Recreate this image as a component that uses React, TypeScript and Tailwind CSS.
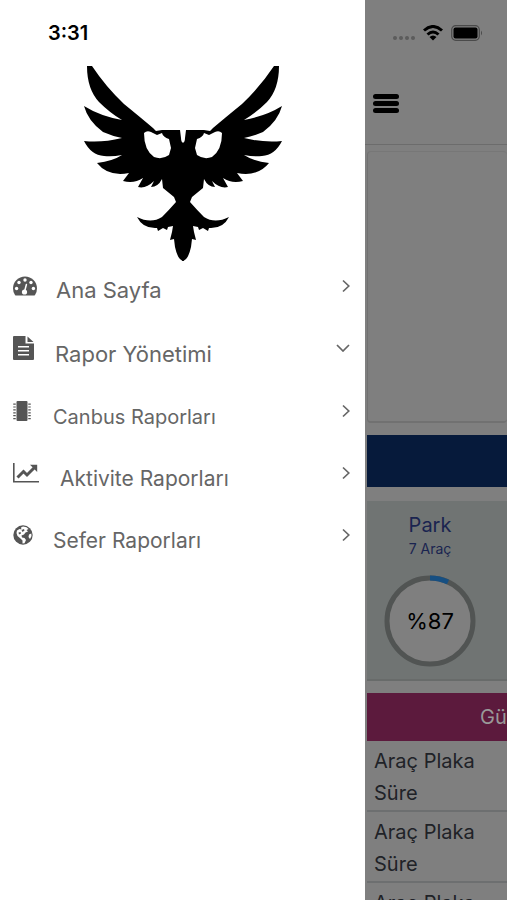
import React from "react";

const font = "font-['Inter','Liberation_Sans',sans-serif]";

function Wing() {
  return (
    <path
      fillRule="evenodd"
      d="M87 67H92Q106 88 124 105Q140 118 153 129L156 132L162 131H180L181 139Q181 144 184 144V262Q178 262 175 248L174 240L170 241L172 233L173 227L168 228L167 231L163 229L158 232L157 229Q143 230 137 218Q151 225 162 218Q169 211 176 203L174 198L163 189L162 180Q158 188 151 188L154 182Q146 190 138 188L143 179Q134 185 123 182L129 174Q108 178 97 164Q113 162 122 156Q112 158 104 157Q91 156 84 142Q102 144 122 139Q112 137 103 133Q88 122 84 107Q100 117 122 121Q110 114 99 103Q87 90 87 67ZM144 134Q147 131 151 133L157 136L162 134Q163 138 169 140L171 149L169 156Q162 161 154 158Q144 151 144 134Z"
    />
  );
}

function EagleLogo() {
  return (
    <svg viewBox="82 67 201 196" className="mx-auto h-[196px] w-[201px]" role="img" aria-label="Logo">
      <Wing />
      <g transform="matrix(-1 0 0 1 366 0)"><Wing /></g>
    </svg>
  );
}

function GaugeIcon() {
  return (
    <svg viewBox="0 0 24 20" className="h-5 w-6">
      <path fill="currentColor" d="M2 19Q0 16 0 12.500A12 12 0 0 1 24 12.500Q24 16 22 19Q21.500 19.500 21 19.500H3Q2.500 19.500 2 19Z" />
      <g fill="white">
        <circle cx="3.600" cy="12.500" r="1.700" /><circle cx="6" cy="6.500" r="1.700" /><circle cx="12" cy="4" r="1.700" /><circle cx="18" cy="6.500" r="1.700" /><circle cx="20.400" cy="12.500" r="1.700" />
        <circle cx="11.500" cy="16" r="2.600" />
      </g>
      <path d="M11.700 15L13.400 8.500" stroke="white" strokeWidth="1.500" strokeLinecap="round" />
    </svg>
  );
}

function FileIcon() {
  return (
    <svg viewBox="0 0 21 24" className="h-6 w-[21px]">
      <path fill="currentColor" fillRule="evenodd" d="M1 0H12.500V7.500H21V23Q21 24 20 24H1Q0 24 0 23V1Q0 0 1 0ZM14.500 .5L20.500 6H14.500ZM5 10V11.500H16V10ZM5 14V15.500H16V14ZM5 18V19.500H16V18Z" />
    </svg>
  );
}

function ChipIcon() {
  return (
    <svg viewBox="0 0 18 20" className="h-5 w-[18px]">
      <rect x="3.500" width="11" height="20" rx="1" fill="currentColor" />
      <path d="M1.500 2.500V18.500M16.500 2.500V18.500" stroke="currentColor" strokeWidth="2.500" strokeDasharray="1.200 1.700" />
    </svg>
  );
}

function ChartIcon() {
  return (
    <svg viewBox="0 0 26 20" className="h-5 w-[26px]" fill="none" stroke="currentColor">
      <path d="M.8 0V18.700H26" strokeWidth="1.600" />
      <path d="M4.500 14.500L10.500 8.500L14 12L21 5" strokeWidth="3" />
      <path d="M17 1.800H24.200V9Z" fill="currentColor" stroke="none" />
    </svg>
  );
}

function GlobeIcon() {
  return (
    <svg viewBox="0 0 20 20" className="h-5 w-5">
      <circle cx="10" cy="10" r="9.700" fill="currentColor" />
      <path fill="white" d="M10 1.500L13.500 2.200L15.500 4L13.500 5L15 6.500L12.500 7.500L11 9.500L8.500 10.500L9 12.500L11.500 13L13 15L11.500 18.300L9.500 18.500L9.500 15.500L7.500 13.500L4.500 11L3.500 8L4 5.500L6.500 4L8.500 4.500L8 2.500ZM16 9.500L18.300 8.500L18.500 11L17 14L15.500 12Z" />
      <path fill="currentColor" d="M8.500 5L11 4L11.500 5.500L9.500 7ZM5.500 7.500L7.500 7L8 8.500L6 9.500Z" />
    </svg>
  );
}

function Chevron({ down = false }: { down?: boolean }) {
  return down ? (
    <svg viewBox="0 0 14 8" className="h-2 w-3.5 shrink-0" fill="none" stroke="currentColor" strokeWidth="1.700"><path d="M1 1L7 7L13 1" /></svg>
  ) : (
    <svg viewBox="0 0 8 14" className="h-3.5 w-2 shrink-0" fill="none" stroke="currentColor" strokeWidth="1.700"><path d="M1 1.500L6.800 7L1 12.500" /></svg>
  );
}

const items = [
  { label: "Ana Sayfa", icon: <GaugeIcon />, cls: "h-16 text-[22px]", gap: "pl-[19px]", iconBox: "h-6" },
  { label: "Rapor Yönetimi", icon: <FileIcon />, cls: "h-[63px] text-[22px]", gap: "pl-[21px]", iconBox: "h-5", open: true },
  { label: "Canbus Raporları", icon: <ChipIcon />, cls: "h-[62px] text-xl", gap: "pl-[22px]", iconBox: "h-5" },
  { label: "Aktivite Raporları", icon: <ChartIcon />, cls: "h-[62px] text-[21px]", gap: "pl-[21px]", iconBox: "h-5" },
  { label: "Sefer Raporları", icon: <GlobeIcon />, cls: "h-[62px] text-[21px]", gap: "pl-5", iconBox: "h-5" },
];

function Drawer() {
  return (
    <aside className="w-[72%] shrink-0 bg-white">
      <div className="flex h-[66px] items-center pl-12 text-xl font-semibold text-black">3:31</div>
      <EagleLogo />
      <nav aria-label="Menü" className="text-[#666]">
        {items.map((item) => (
          <button key={item.label} type="button" aria-expanded={item.open} className={`flex w-full items-start pl-[13px] pr-[15px] pt-3 text-left leading-8 ${item.cls}`}>
            <span className={`flex shrink-0 items-center text-[#555] ${item.iconBox}`}>{item.icon}</span>
            <span className={`grow whitespace-nowrap ${item.gap}`}>{item.label}</span>
            <span className={`flex items-center ${item.iconBox}`}><Chevron down={item.open} /></span>
          </button>
        ))}
      </nav>
    </aside>
  );
}

function StatusBar() {
  return (
    <div className="flex h-[66px] items-center justify-end gap-2 pr-6">
      <svg viewBox="0 0 22 4" className="mt-2.5 h-1 w-[22px] fill-[#5c5c5c]"><circle cx="2" cy="2" r="2" /><circle cx="8" cy="2" r="2" /><circle cx="14" cy="2" r="2" /><circle cx="20" cy="2" r="2" /></svg>
      <svg viewBox="0 0 20 16" className="h-4 w-5" fill="none" stroke="black" strokeWidth="3"><path d="M1 5.500Q10 -2.500 19 5.500M4.500 9.500Q10 4.500 15.500 9.500" /><path d="M6.500 12Q10 9 13.500 12L10 15.500Z" fill="black" stroke="none" /></svg>
      <svg viewBox="0 0 32 16" className="h-4 w-8"><rect x=".7" y=".7" width="27.600" height="14.600" rx="4" fill="none" stroke="#4a4a4a" strokeWidth="1.200" /><rect x="2.500" y="2.500" width="24" height="11" rx="2" /><path d="M30 5.500Q32 8 30 10.500Z" fill="#4a4a4a" /></svg>
    </div>
  );
}

function Dashboard() {
  return (
    <main className="min-w-0 grow overflow-hidden bg-[#7f7f7f]">
      <StatusBar />
      <header className="flex h-[79px] items-center border-b border-[#6c6c6c] pb-1 pl-2">
        <button type="button" aria-label="Menüyü aç" className="flex w-[26px] flex-col gap-0.5">
          <span className="h-[5px] rounded-full bg-black" />
          <span className="h-[5px] rounded-full bg-black" />
          <span className="h-[5px] rounded-full bg-black" />
        </button>
      </header>
      <div className="pl-0.5">
        <section className="mt-1.5 h-[272px] rounded-sm border-b-2 border-l border-t border-[#717171] border-t-[#777]" />
        <div className="mt-3 h-[52px] bg-[#061a3b]" />
        <section className="mt-3.5 flex h-[180px] flex-col border-b-2 border-[#686b6a] bg-[#707473] pt-3">
          <div className="flex w-[126px] flex-col items-center">
            <h2 className="text-xl leading-6 text-[#1a2450]">Park</h2>
            <p className="text-sm leading-6 text-[#1a2450]">7 Araç</p>
            <div className="relative mt-3.5 flex size-[92px] items-center justify-center">
              <svg viewBox="0 0 92 92" className="absolute inset-0 size-full" fill="none" strokeWidth="5">
                <circle cx="46" cy="46" r="43" fill="#7f7f7f" stroke="#515453" />
                <path d="M46 3A43 43 0 0 1 64 7" stroke="#164f82" />
              </svg>
              <span className="relative text-[22px] text-black">%87</span>
            </div>
          </div>
        </section>
        <section className="mt-3">
          <h2 className="h-12 whitespace-nowrap bg-[#5c1a3d] pl-[113px] text-xl leading-[48px] text-[#999]">Gü</h2>
          <ul className="text-xl leading-8 text-[#202227]">
            {[0, 1, 2].map((row) => (
              <li key={row} className="h-[71px] border-b-2 border-[#6d6f70] pl-[7px] pt-1"><p>Araç Plaka</p><p>Süre</p></li>
            ))}
          </ul>
        </section>
      </div>
    </main>
  );
}

export default function App() {
  return (
    <div className={`flex h-screen w-full overflow-hidden bg-white ${font}`}>
      <Drawer />
      <Dashboard />
    </div>
  );
}
